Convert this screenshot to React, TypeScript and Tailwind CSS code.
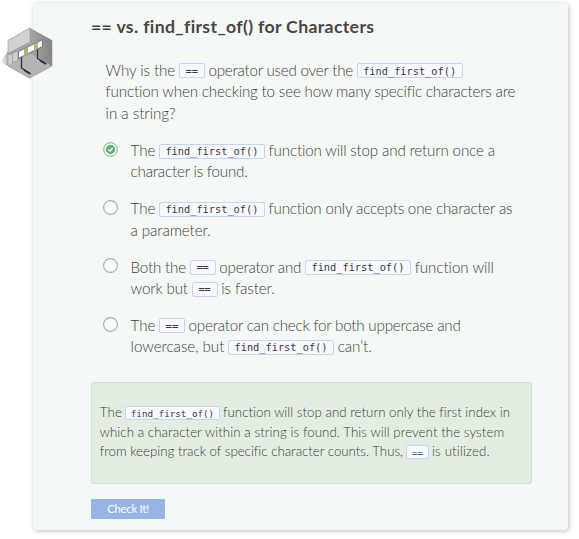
import { useLayoutEffect, useRef, type ReactNode } from "react";

/** A stretch of text whose letters are spaced to fill an exact width. */
function Run({ w, children }: { w: number; children: string }) {
  const ref = useRef<HTMLSpanElement>(null);
  useLayoutEffect(() => {
    const el = ref.current;
    if (!el) return;
    el.style.letterSpacing = "0px";
    const natural = el.getBoundingClientRect().width;
    el.style.letterSpacing = `${(w - natural) / children.length}px`;
  }, [w, children]);
  return (
    <span ref={ref} className="shrink-0 whitespace-nowrap">
      {children}
    </span>
  );
}

function Code({ children, wide, small }: { children: string; wide?: boolean; small?: boolean }) {
  const size = small
    ? `h-[14px] text-[9.24px] ${wide ? "w-[95px]" : "w-[23px]"} mx-[3px]`
    : `h-[15px] text-[10.3px] ${wide ? "w-[106px]" : "w-[26px]"} mx-[3.7px]`;
  return (
    <code
      className={`mt-px flex shrink-0 items-center justify-center rounded-[2px] border border-[#c3d3fb] bg-[#f8f9fe] font-['DejaVu_Sans_Mono',monospace] leading-none text-[#3c3838] ${size}`}
    >
      {children}
    </code>
  );
}

function Line({ children, small }: { children: ReactNode; small?: boolean }) {
  return <div className={`flex items-center ${small ? "h-[19.4px]" : "h-[21.5px]"}`}>{children}</div>;
}

function Option({ checked, children }: { checked?: boolean; children: ReactNode }) {
  return (
    <label className="flex h-[58.3px] items-start">
      <span className="mt-[2px] mr-[12.4px] ml-[-2.4px] flex h-[15px] w-[15px] shrink-0">
        <svg viewBox="0 0 15 15" className="h-[15px] w-[15px]">
          {checked ? (
            <>
              <circle cx="7.5" cy="7.5" r="6.8" fill="#f8fcf9" stroke="#74b786" strokeWidth="1" />
              <circle cx="7.5" cy="7.5" r="4.7" fill="#65b07a" />
              <path d="M5.3 7.5 L7 9.1 L9.8 5.8" fill="none" stroke="#fff" strokeWidth="1.3" />
            </>
          ) : (
            <circle cx="7.5" cy="7.5" r="6.9" fill="#f8fafb" stroke="#a9abc2" strokeWidth="1.1" />
          )}
        </svg>
      </span>
      <div>{children}</div>
    </label>
  );
}

function BarrierIcon() {
  return (
    <svg viewBox="0 0 60 65" className="absolute top-[20px] left-0 h-[65px] w-[60px]">
      <defs>
        <linearGradient id="shade" x1="0" x2="1">
          <stop offset="0" stopColor="#bbb" stopOpacity="0" />
          <stop offset="1" stopColor="#999" stopOpacity="0.8" />
        </linearGradient>
        <linearGradient id="rightWall" x1="0" x2="1">
          <stop offset="0" stopColor="#a6a6a6" />
          <stop offset="1" stopColor="#858585" />
        </linearGradient>
      </defs>
      <path d="M0 42 L8 31 L8 46 Z" fill="url(#shade)" />
      <path d="M29.5 8 L52 20.5 V46 L29.5 58.3 L8 46 V20.5 Z" fill="#b4b4b4" />
      <path d="M29.5 8 L52 20.5 V46 L29.5 33 Z" fill="url(#rightWall)" />
      <path d="M8 20.5 L29.5 8 V22 L8 33 Z" fill="#d2d2d2" />
      <path d="M8 33 L29.5 22 V34 L8 46 Z" fill="#a4a4a4" />
      <path d="M8 35 L12 34.5 V43.5 L8 45.5 Z M13 33.5 L17.5 31.5 V40 L13 42 Z" fill="#d0d0d0" />
      <path d="M29.5 8 L52 20.5 V46 L29.5 58.3 L8 46 V20.5 Z" fill="none" stroke="#969696" strokeWidth="0.6" />
      <path d="M21.5 37 V48 L30 53.5 M37.5 29 V38.5 L46 44" fill="none" stroke="#353535" strokeWidth="1.3" />
      <path d="M24 50 L30.5 54 M40 40.3 L46 44" stroke="#333" strokeWidth="2" />
      <path d="M18.5 31.5 L42.5 19.7 V26.5 L18.5 38.3 Z" fill="#fcfcfc" stroke="#626262" strokeWidth="0.8" />
      <path d="M24 29 L28 27 V34 L24 36 Z M34 24 L38 22 V29 L34 31 Z" fill="#b1b56f" />
    </svg>
  );
}

export default function App() {
  return (
    <div className="relative h-[539px] w-[579px] overflow-hidden bg-white pt-[3px] pl-[33px] font-['Lato',sans-serif]">
      <main className="h-[527px] w-[535px] rounded-[4px] bg-[#f4f9f6] pt-[14px] pl-[58px] shadow-[1px_1px_5px_rgba(0,0,0,0.25)]">
        <h1 className="flex h-[21px] items-center text-[17.7px] font-bold text-[#4b4445]">
          <Run w={283}>== vs. find_first_of() for Characters</Run>
        </h1>
        <div className="mt-[21.7px] ml-[14.6px] text-[15.2px] leading-none font-light text-[#443d3c]">
          <Line>
            <Run w={69.5}>Why is the</Run>
            <Code>==</Code>
            <Run w={144.5}>operator used over the</Run>
            <Code wide>find_first_of()</Code>
          </Line>
          <Line>
            <Run w={409.5}>function when checking to see how many specific characters are</Run>
          </Line>
          <Line>
            <Run w={70}>in a string?</Run>
          </Line>
          <div className="mt-[15.6px]">
            <Option checked>
              <Line>
                <Run w={24.6}>The</Run>
                <Code wide>find_first_of()</Code>
                <Run w={226.5}>function will stop and return once a</Run>
              </Line>
              <Line>
                <Run w={117}>character is found.</Run>
              </Line>
            </Option>
            <Option>
              <Line>
                <Run w={24.6}>The</Run>
                <Code wide>find_first_of()</Code>
                <Run w={244}>function only accepts one character as</Run>
              </Line>
              <Line>
                <Run w={80}>a parameter.</Run>
              </Line>
            </Option>
            <Option>
              <Line>
                <Run w={55.3}>Both the</Run>
                <Code>==</Code>
                <Run w={82}>operator and</Run>
                <Code wide>find_first_of()</Code>
                <Run w={79.5}>function will</Run>
              </Line>
              <Line>
                <Run w={57.3}>work but</Run>
                <Code>==</Code>
                <Run w={53.5}>is faster.</Run>
              </Line>
            </Option>
            <Option>
              <Line>
                <Run w={24.6}>The</Run>
                <Code>==</Code>
                <Run w={272}>operator can check for both uppercase and</Run>
              </Line>
              <Line>
                <Run w={93.7}>lowercase, but</Run>
                <Code wide>find_first_of()</Code>
                <Run w={34}>can’t.</Run>
              </Line>
            </Option>
          </div>
        </div>
        <section className="mt-[9.2px] h-[102px] w-[441px] rounded-[2px] border border-[#d2dfd2] bg-[#e3eee3] pt-[20px] pl-[7.7px] text-[13.3px] leading-none font-light text-[#3f3b38]">
          <Line small>
            <Run w={22.3}>The</Run>
            <Code small wide>find_first_of()</Code>
            <Run w={287}>function will stop and return only the first index in</Run>
          </Line>
          <Line small>
            <Run w={404.5}>which a character within a string is found. This will prevent the system</Run>
          </Line>
          <Line small>
            <Run w={303}>from keeping track of specific character counts. Thus,</Run>
            <Code small>==</Code>
            <Run w={58}>is utilized.</Run>
          </Line>
        </section>
        <button className="mt-[15px] flex h-[20px] w-[74px] items-center justify-center rounded-[1px] bg-[#98b4e7] text-[11.3px] text-white">
          <Run w={41.5}>Check It!</Run>
        </button>
      </main>
      <BarrierIcon />
    </div>
  );
}
